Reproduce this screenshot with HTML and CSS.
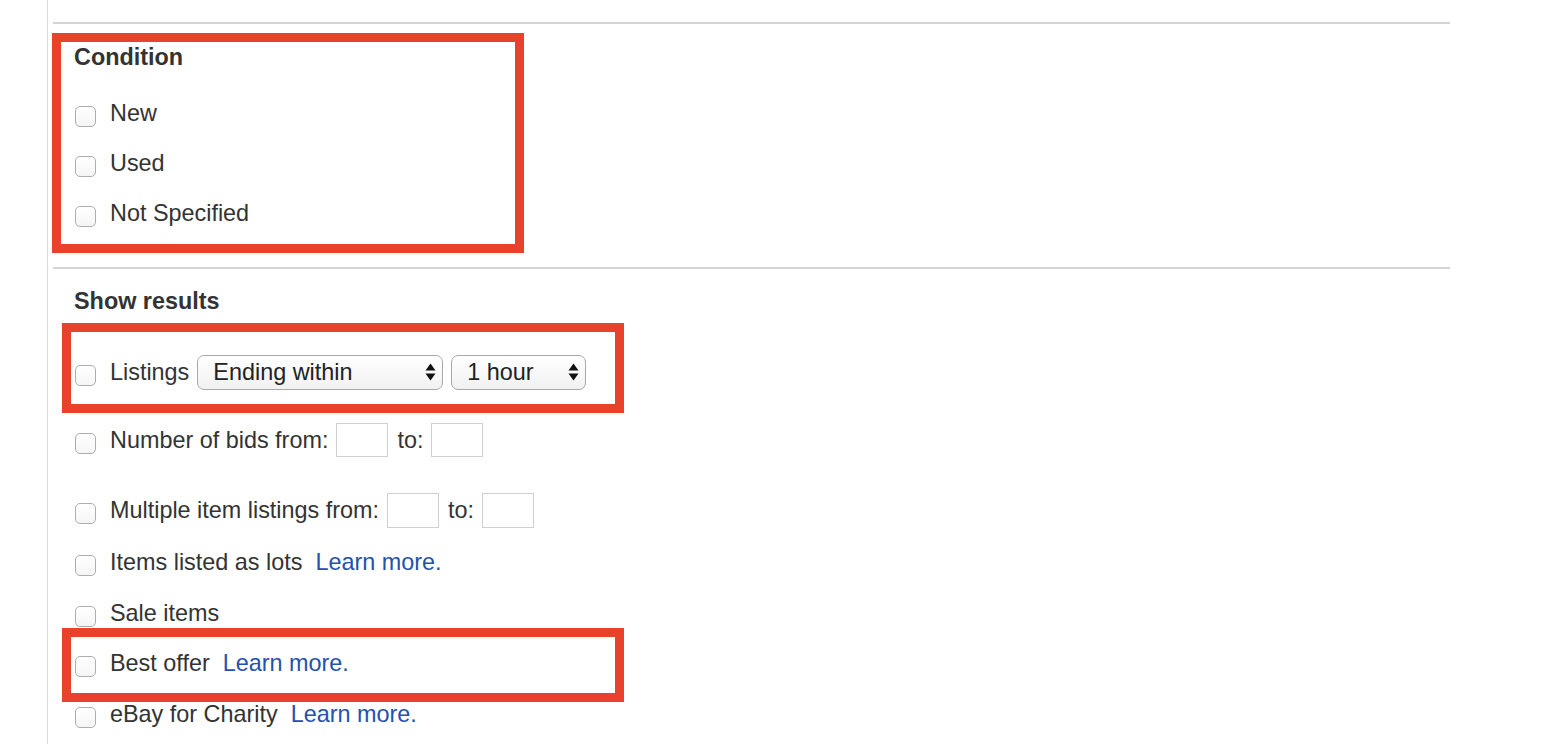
FILE: index.html
```html
<!DOCTYPE html>
<html lang="en">
<head>
<meta charset="utf-8">
<title>Advanced search filters</title>
<link rel="stylesheet" href="styles.css">
</head>
<body>
<div class="panel">
  <section class="sec sec1">
    <div class="hl hl1">
      <h2 class="heading">Condition</h2>
      <div class="row cond"><span class="cb"></span><span class="lbl">New</span></div>
      <div class="row cond"><span class="cb"></span><span class="lbl">Used</span></div>
      <div class="row cond"><span class="cb"></span><span class="lbl">Not Specified</span></div>
    </div>
  </section>
  <section class="sec sec2">
    <h2 class="heading">Show results</h2>
    <div class="hl hl2">
      <div class="row tall"><span class="cb"></span><span class="lbl">Listings</span>
        <div class="sel sel-wide"><span>Ending within</span>
          <svg class="arr" width="11" height="18" viewBox="0 0 11 18"><path d="M5.5 0.5 L10.5 7.5 L0.5 7.5 Z M0.5 10.5 L10.5 10.5 L5.5 17.5 Z" fill="#111"/></svg>
        </div>
        <div class="sel sel-narrow"><span>1 hour</span>
          <svg class="arr" width="11" height="18" viewBox="0 0 11 18"><path d="M5.5 0.5 L10.5 7.5 L0.5 7.5 Z M0.5 10.5 L10.5 10.5 L5.5 17.5 Z" fill="#111"/></svg>
        </div>
      </div>
    </div>
    <div class="row inp-row bids"><span class="cb"></span><span class="lbl">Number of bids from:</span><span class="box"></span><span class="to">to:</span><span class="box"></span></div>
    <div class="row inp-row multi"><span class="cb"></span><span class="lbl">Multiple item listings from:</span><span class="box"></span><span class="to">to:</span><span class="box"></span></div>
    <div class="row plain lots"><span class="cb"></span><span class="lbl">Items listed as lots</span><a class="more" href="#">Learn more.</a></div>
    <div class="row plain sale"><span class="cb"></span><span class="lbl">Sale items</span></div>
    <div class="hl hl3">
      <div class="row plain"><span class="cb"></span><span class="lbl">Best offer</span><a class="more" href="#">Learn more.</a></div>
    </div>
    <div class="row plain charity"><span class="cb"></span><span class="lbl">eBay for Charity</span><a class="more" href="#">Learn more.</a></div>
  </section>
</div>
</body>
</html>
```
FILE: styles.css
```css
* { box-sizing: border-box; }
html, body { margin: 0; padding: 0; background: #fff; }
body {
  font-family: "Liberation Sans", Arial, Helvetica, sans-serif;
  font-size: 23.4px;
  color: #333;
  overflow: hidden;
}
.panel {
  margin-left: 47px;
  border-left: 1px solid #d9d9d9;
  height: 744px;
  padding-top: 22px;
}
.sec {
  margin-left: 5px;
  width: 1397px;
  border-top: 2px solid #d4d4d4;
}
.sec1 { padding-top: 9px; padding-bottom: 14px; }
.sec2 { padding-top: 18px; padding-left: 21px; }

.heading {
  margin: 0;
  font-size: 23.4px;
  font-weight: bold;
  line-height: 28px;
  height: 28px;
  color: #333;
}
.hl {
  border: 9px solid #e8412c;
}
.hl1 {
  margin-left: -1px;
  width: 472px;
  height: 220px;
  padding: 1px 0 0 13px;
}
.hl1 .heading { margin-bottom: 17px; }
.hl2 {
  margin-top: 8px;
  margin-left: -12px;
  width: 562px;
  height: 90px;
  padding: 15px 0 0 3px;
}
.hl3 {
  margin-left: -12px;
  width: 562px;
  height: 74px;
  padding: 11px 0 0 3px;
}

.row {
  display: flex;
  align-items: center;
  white-space: nowrap;
}
.row.cond { height: 50px; }
.row.tall { height: 50px; }
.row.inp-row { height: 36px; }
.row.plain { height: 30px; }
.bids { margin-top: 9px; }
.multi { margin-top: 34px; }
.lots { margin-top: 19px; }
.sale { margin-top: 21px; }
.row.charity { height: 24px; }

.cb {
  flex: none;
  width: 21px;
  height: 21px;
  margin-left: 1px;
  margin-top: 7px;
  border: 1px solid #adadad;
  border-radius: 5px;
  background: linear-gradient(#ffffff, #f5f5f5);
}
.lbl { margin-left: 14px; }
.more {
  margin-left: 13px;
  color: #2451ad;
  text-decoration: none;
}

.sel {
  flex: none;
  display: flex;
  align-items: center;
  justify-content: space-between;
  height: 35px;
  margin-left: 8px;
  padding: 0 6px 0 15px;
  border: 1px solid #a8a8a8;
  border-radius: 7px;
  background: linear-gradient(#ffffff, #f1f1f1);
  color: #222;
}
.sel-wide { width: 246px; }
.sel-narrow { width: 135px; }
.arr { flex: none; display: block; }

.box {
  flex: none;
  display: block;
  width: 52px;
  height: 34px;
  margin-left: 8px;
  border: 1px solid #cfcfcf;
  background: #fff;
}
.to { margin-left: 9px; }
.multi .box { height: 35px; }
```
